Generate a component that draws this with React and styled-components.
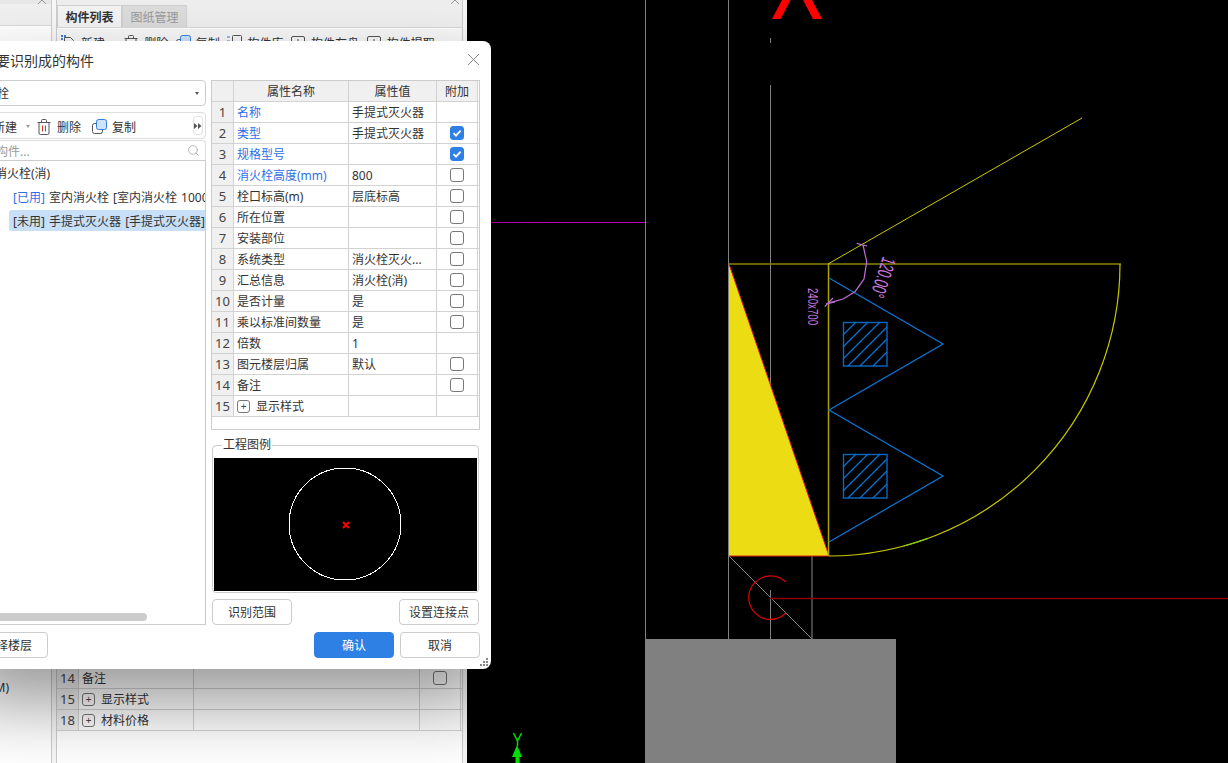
import React from "react";
import styled, { createGlobalStyle } from "styled-components";
import { Search } from "lucide-react";

const GlobalStyle = createGlobalStyle`
  html, body {
    margin: 0;
    padding: 0;
    overflow: hidden;
    background: #000;
  }
  body {
    font-family: "Noto Sans", "Noto Sans CJK SC", sans-serif;
    font-size: 12px;
    color: #333;
  }
`;

const Page = styled.div`
  position: relative;
  display: flex;
  width: 1228px;
  height: 763px;
  overflow: hidden;
`;

// background application panels, mostly hidden by the dialog
const SidePanel = styled.div`
  display: flex;
  gap: 4px;
  width: 467px;
  flex-shrink: 0;
  background: #f7f7f7;
`;

const LeftDock = styled.div`
  position: relative;
  display: flex;
  flex-direction: column;
  width: 52px;
  background: #fff;
  border-right: 1px solid #ccc;
  box-sizing: border-box;
`;

const LeftDockHead = styled.div`
  height: 26px;
  background: #f0f0f0;
  border-top: 4px solid #e8e8e8;
  border-bottom: 1px solid #ddd;
  box-sizing: border-box;
`;

const LeftDockBody = styled.div`
  flex: 1;
  display: flex;
  flex-direction: column;
  justify-content: flex-end;
  padding-bottom: 66px;
  overflow: hidden;
`;

const ClippedUnit = styled.div`
  margin-left: -9px;
  line-height: 18px;
  white-space: nowrap;
`;

const DockClose = styled.svg`
  position: absolute;
  top: -4px;
  right: ${(p) => p.$right}px;
  width: 8px;
  height: 8px;
  stroke: #999;
`;

const RightDock = styled.div`
  position: relative;
  display: flex;
  flex-direction: column;
  width: 407px;
  background: #fff;
  border-left: 1px solid #ccc;
  border-right: 1px solid #ccc;
  box-sizing: border-box;
`;

const Tabs = styled.div`
  display: flex;
  height: 28px;
  padding-top: 5px;
  background: #eeeeee;
  border-bottom: 1px solid #d8d8d8;
  box-sizing: border-box;
`;

const Tab = styled.div`
  width: 65px;
  display: flex;
  align-items: center;
  justify-content: center;
  background: ${(p) => (p.$active ? "#f3f3f3" : "#dcdcdc")};
  color: ${(p) => (p.$active ? "#333" : "#999")};
  font-weight: ${(p) => (p.$active ? 700 : 400)};
  border: 1px solid #d0d0d0;
  border-bottom: none;
  box-sizing: border-box;
`;

const Toolbar = styled.div`
  display: flex;
  align-items: center;
  gap: ${(p) => p.$gap || 8}px;
  height: ${(p) => p.$height || 27}px;
  padding-left: ${(p) => p.$left || 4}px;
  padding-right: 2px;
  background: ${(p) => p.$bg || "#fff"};
  box-sizing: border-box;
  white-space: nowrap;
`;

const DockToolbar = styled(Toolbar)`
  margin-top: 1px;
  padding-top: 1px;
`;

const Tool = styled.div`
  display: flex;
  align-items: center;
  gap: ${(p) => p.$gap || 6}px;
  margin-right: ${(p) => p.$after || 0}px;
  color: #333;
`;

const Caret = styled.span`
  width: 0;
  height: 0;
  margin-left: ${(p) => p.$ml || 0}px;
  border-left: 2.5px solid transparent;
  border-right: 2.5px solid transparent;
  border-top: 3px solid ${(p) => p.$color || "#999"};
`;

const DockBody = styled.div`
  flex: 1;
  display: flex;
  flex-direction: column;
  justify-content: flex-end;
  padding-bottom: 32px;
`;

const Row = styled.div`
  display: grid;
  grid-template-columns: ${(p) => p.$cols};
  height: 21px;
  box-sizing: border-box;
  border-bottom: 1px solid #d2d2d2;
`;

const Cell = styled.div`
  display: flex;
  align-items: center;
  gap: 6px;
  padding: 0 3px;
  min-width: 0;
  border-right: 1px solid #d2d2d2;
  color: ${(p) => (p.$link ? "#2f6fe6" : "#333")};
  white-space: nowrap;
  overflow: hidden;
`;

const NumCell = styled(Cell)`
  justify-content: center;
  padding: 0;
  background: #f0f0f0;
  font-size: 13px;
  color: #444;
`;

const HeadCell = styled(Cell)`
  justify-content: center;
  background: #f0f0f0;
`;

const CheckCell = styled(Cell)`
  justify-content: center;
  padding: 0;
`;

const Box = styled.span`
  display: flex;
  align-items: center;
  justify-content: center;
  width: 14px;
  height: 14px;
  box-sizing: border-box;
  border-radius: 3px;
  border: 1px solid ${(p) => (p.$checked ? "#2f80e4" : "#777")};
  background: ${(p) => (p.$checked ? "#2f80e4" : "transparent")};
`;

const Expand = styled.span`
  display: flex;
  align-items: center;
  justify-content: center;
  width: 13px;
  height: 13px;
  box-sizing: border-box;
  border: 1px solid #777;
  border-radius: 3px;
  font-size: 10px;
  line-height: 1;
  color: #444;
`;

const Canvas = styled.div`
  flex: 1;
  background: #000;
  svg {
    display: block;
    width: 100%;
    height: 100%;
  }
`;

// dialog
const Dialog = styled.div`
  position: absolute;
  left: -40px;
  top: 41px;
  width: 531px;
  height: 628px;
  display: flex;
  flex-direction: column;
  background: #fff;
  border-radius: 8px;
  box-shadow: 0 35px 70px rgba(0, 0, 0, 0.4);
`;

const TitleBar = styled.div`
  display: flex;
  align-items: center;
  justify-content: space-between;
  height: 39px;
  padding: 0 11px 2px 8px;
  font-size: 14px;
  box-sizing: border-box;
`;

const DialogBody = styled.div`
  flex: 1;
  display: flex;
  gap: 5px;
  padding: 0 11px 0 8px;
  min-height: 0;
`;

const LeftCol = styled.div`
  width: 238px;
  display: flex;
  flex-direction: column;
`;

const RightCol = styled.div`
  width: 269px;
  display: flex;
  flex-direction: column;
`;

const SelectBox = styled.div`
  display: flex;
  align-items: center;
  justify-content: space-between;
  height: 26px;
  padding: 0 6px 0 4px;
  border: 1px solid #ccc;
  border-radius: 4px;
  box-sizing: border-box;
  margin-right: 0;
`;

const ToolBox = styled(Toolbar)`
  margin-top: 6px;
  padding-top: 2px;
  border: 1px solid #ddd;
  border-radius: 4px;
`;

const MoreBtn = styled.div`
  margin-left: auto;
  margin-top: -2px;
  width: 10px;
  height: 19px;
  display: flex;
  align-items: center;
  justify-content: center;
  border: 1px solid #e2e2e2;
  border-radius: 3px;
  box-sizing: border-box;
`;

const SearchBox = styled.div`
  display: flex;
  align-items: center;
  justify-content: space-between;
  height: 20px;
  margin-top: 1px;
  padding: 0 5px 0 3px;
  border: 1px solid #ddd;
  border-bottom: none;
  border-radius: 4px 4px 0 0;
  color: #999;
  box-sizing: border-box;
`;

const Tree = styled.div`
  position: relative;
  flex: 1;
  padding-top: 1px;
  border: 1px solid #ccc;
  box-sizing: border-box;
  overflow: hidden;
`;

const TreeRow = styled.div`
  height: 21px;
  margin: 0 0 3px ${(p) => p.$indent}px;
  padding-left: ${(p) => p.$pad}px;
  display: flex;
  align-items: center;
  gap: 4px;
  white-space: nowrap;
  word-spacing: 1px;
  border-radius: 3px 0 0 3px;
  background: ${(p) => (p.$selected ? "#c7dff7" : "transparent")};
`;

const UsedTag = styled.span`
  color: #2f6fe6;
`;

const ScrollThumb = styled.div`
  position: absolute;
  left: 0;
  bottom: 3px;
  width: 178px;
  height: 8px;
  border-radius: 4px;
  background: #ccc;
`;

const PropTable = styled.div`
  height: 350px;
  padding-left: 0;
  border: 1px solid #ccc;
  box-sizing: border-box;
`;

const Legend = styled.fieldset`
  margin: 7px 1px 0;
  padding: 5px 1px 1px;
  height: 156px;
  border: 1px solid #ccc;
  border-radius: 4px;
  box-sizing: border-box;
  legend {
    margin-left: 8px;
    padding: 0 1px;
    line-height: 16px;
  }
`;

const Preview = styled.div`
  height: 133px;
  background: #000;
  svg {
    display: block;
    width: 100%;
    height: 100%;
  }
`;

const ButtonRow = styled.div`
  display: flex;
  justify-content: space-between;
  margin-top: 6px;
  padding: 0 1px;
`;

const Button = styled.button`
  width: 80px;
  height: 26px;
  padding: 0;
  border-radius: 4px;
  border: 1px solid ${(p) => (p.$primary ? "#2f80e4" : "#ccc")};
  background: ${(p) => (p.$primary ? "#2f80e4" : "#fff")};
  color: ${(p) => (p.$primary ? "#fff" : "#333")};
  font: inherit;
  font-size: 12px;
`;

const Footer = styled.div`
  display: flex;
  justify-content: space-between;
  padding: 7px 11px 11px 8px;
`;

const FooterRight = styled.div`
  display: flex;
  gap: 6px;
`;

const Grip = styled.svg`
  position: absolute;
  right: 2px;
  bottom: 2px;
  width: 9px;
  height: 9px;
  fill: #888;
`;

const dialogCols = "22px 115px 88px 41px";
const dockCols = "22px 115px 226px 41px";

const props = [
  { n: 1, name: "名称", value: "手提式灭火器", link: true, check: null },
  { n: 2, name: "类型", value: "手提式灭火器", link: true, check: true },
  { n: 3, name: "规格型号", value: "", link: true, check: true },
  { n: 4, name: "消火栓高度(mm)", value: "800", link: true, check: false },
  { n: 5, name: "栓口标高(m)", value: "层底标高", check: false },
  { n: 6, name: "所在位置", value: "", check: false },
  { n: 7, name: "安装部位", value: "", check: false },
  { n: 8, name: "系统类型", value: "消火栓灭火...", check: false },
  { n: 9, name: "汇总信息", value: "消火栓(消)", check: false },
  { n: 10, name: "是否计量", value: "是", check: false },
  { n: 11, name: "乘以标准间数量", value: "是", check: false },
  { n: 12, name: "倍数", value: "1", check: null },
  { n: 13, name: "图元楼层归属", value: "默认", check: false },
  { n: 14, name: "备注", value: "", check: false },
  { n: 15, name: "显示样式", value: "", check: null, expand: true },
];

const dockRows = [
  { n: 14, name: "备注", check: false },
  { n: 15, name: "显示样式", check: null, expand: true },
  { n: 18, name: "材料价格", check: null, expand: true },
];

const CheckBox = ({ checked }) => (
  <Box $checked={checked}>
    {checked && (
      <svg width="10" height="10" viewBox="0 0 10 10" fill="none" stroke="#fff" strokeWidth="1.8">
        <path d="M1.5 5.2 4 7.6 8.6 2.6" />
      </svg>
    )}
  </Box>
);

const PropRow = ({ cols, row }) => (
  <Row $cols={cols}>
    <NumCell>{row.n}</NumCell>
    <Cell $link={row.link}>
      {row.expand && <Expand>+</Expand>}
      {row.name}
    </Cell>
    <Cell>{row.value}</Cell>
    <CheckCell>{row.check !== null && <CheckBox checked={row.check} />}</CheckCell>
  </Row>
);

const NewIcon = () => (
  <svg width="14" height="15" viewBox="0 0 14 15" fill="none" stroke="#555">
    <path d="M3.5 2.5h6l3 3v8h-9z" />
    <path d="M0 0h2v2H0zM3 0h2v2H3zM0 3h2v2H0z" fill="#3a7fe0" stroke="none" />
  </svg>
);

const TrashIcon = () => (
  <svg width="14" height="16" viewBox="0 0 14 16" fill="none" stroke="#555">
    <path d="M.5 3.5h13M4.5 3.5v-2a1 1 0 0 1 1-1h3a1 1 0 0 1 1 1v2" />
    <path d="M2 3.5v10.5a1.5 1.5 0 0 0 1.5 1.5h7a1.5 1.5 0 0 0 1.5-1.5V3.500" />
    <path d="M5.500 6.500v6M8.500 6.500v6" stroke="#d63a2f" />
  </svg>
);

const CopyIcon = () => (
  <svg width="15" height="15" viewBox="0 0 15 15" fill="none">
    <rect x="0.5" y="4.500" width="10" height="10" rx="2" stroke="#555" />
    <rect x="4.500" y="0.500" width="10" height="10" rx="2" fill="#cfe2fa" stroke="#2f80e4" />
  </svg>
);

const LibIcon = () => (
  <svg width="15" height="15" viewBox="0 0 15 15" fill="none" stroke="#555">
    <rect x="5.500" y="0.500" width="9" height="13" rx="1" />
    <path d="M0 2h3M0 6h3M0 10h3" stroke="#3a7fe0" />
  </svg>
);

const SaveIcon = () => (
  <svg width="14" height="14" viewBox="0 0 14 14" fill="none" stroke="#555">
    <rect x="0.500" y="0.500" width="13" height="13" rx="1.500" />
    <path d="M3.500 13V8h7v5M7 3v3" />
  </svg>
);

const hatch = [1310, 1322, 1334, 1346, 1358, 1371];
const triangle = "M829 278 943 344 829 410 943 476 829 542";

const Drawing = () => (
  <svg viewBox="467 0 761 763" fill="none">
    <path d="M491 222.500H645" stroke="#c000c0" />
    <path d="M645.500 0V640" stroke="#808080" />
    <path d="M728.500 0V640" stroke="#808080" />
    <path d="M770.500 38V43M770.500 85V400M770.500 590V639" stroke="#808080" />
    <path d="M812 556V639" stroke="#5c5c5c" strokeWidth="1.500" />
    <path d="M729 556 812 639" stroke="#808080" />

    <path d="M772 19h8.500l10-19h-8.500zM813 19h9l-10-19h-9z" fill="#ff0000" />

    <path d="M729 264 829 556H729z" fill="#ebdc14" />
    <path d="M729 264 829 556H729" stroke="#e02010" />
    <path d="M729 264H1121" stroke="#8a8400" strokeWidth="1.500" />
    <path d="M828.500 264V556" stroke="#aaa200" strokeWidth="1.500" />
    <path d="M828 264 1082 118" stroke="#c8c800" />
    <path d="M1120 264A292 292 0 0 1 829 556" stroke="#c8c800" strokeWidth="1.200" />
    <path d="M927.900 538.400A292 292 0 0 1 903.600 546" stroke="#80d010" strokeWidth="1.200" />

    <path d={triangle} stroke="#0a78dc" strokeWidth="1.200" />
    {[0, -132].map((dy) => (
      <g key={dy} transform={`translate(0 ${dy})`} stroke="#0a70d0" strokeWidth="1.200">
        <rect x="843.500" y="454.500" width="43.500" height="43.500" stroke="#0a68c0" strokeWidth="1.400" />
        {hatch.map((c) => (
          <path
            key={c}
            d={`M${Math.max(843, c - 498)} ${Math.min(498, c - 843)}L${Math.min(887, c - 454)} ${Math.max(454, c - 887)}`}
          />
        ))}
      </g>
    ))}

    <g stroke="#c070d8" strokeWidth="1.200">
      <path d="M856.700 243.300 867 246M863 245 866.700 261.700 864 279 855 291.700 843 299 830 302.700" />
      <path d="M824.700 306.700 833 298M826 304 835 302" />
    </g>
    <g fill="#c878dc" fontFamily="Liberation Sans, sans-serif">
      <text
        transform="translate(883 256) rotate(108)"
        fontSize="20"
        textLength="41"
        lengthAdjust="spacingAndGlyphs"
      >
        120.00°
      </text>
      <text
        transform="translate(808 288) rotate(90)"
        fontSize="15"
        textLength="37"
        lengthAdjust="spacingAndGlyphs"
      >
        240x700
      </text>
    </g>

    <path d="M785.700 582A21.800 21.800 0 1 0 786 613" stroke="#e00000" strokeWidth="1.200" />
    <path d="M770 598.500H1228" stroke="#8a0000" strokeWidth="1.500" />

    <rect x="645" y="639" width="251" height="124" fill="#808080" />

    <path d="M513.500 733 517.500 741 521.500 733M517.500 741V746" stroke="#00e000" strokeWidth="1.500" />
    <path d="M517 745 522 757H519.500V763H515.500V757H512z" fill="#00e000" />
  </svg>
);

export default function App() {
  return (
    <Page>
      <GlobalStyle />
      <SidePanel>
        <LeftDock>
          <LeftDockHead />
          <DockClose $right={5} viewBox="0 0 8 8">
            <path d="M0 0 8 8M8 0 0 8" />
          </DockClose>
          <LeftDockBody>
            <ClippedUnit>(M)</ClippedUnit>
          </LeftDockBody>
        </LeftDock>
        <RightDock>
          <Tabs>
            <Tab $active>构件列表</Tab>
            <Tab>图纸管理</Tab>
          </Tabs>
          <DockClose $right={3} viewBox="0 0 8 8">
            <path d="M0 0 8 8M8 0 0 8" />
          </DockClose>
          <DockToolbar $bg="#f7f7f7" $height={26} $gap={7.6}>
            <Tool><NewIcon />新建</Tool>
            <Caret />
            <Tool><TrashIcon />删除</Tool>
            <Tool $gap={5}><CopyIcon />复制</Tool>
            <Tool $gap={5}><LibIcon />构件库</Tool>
            <Tool><SaveIcon />构件存盘</Tool>
            <Tool><SaveIcon />构件提取</Tool>
          </DockToolbar>
          <DockBody>
            {dockRows.map((row) => (
              <PropRow key={row.n} cols={dockCols} row={{ ...row, value: "" }} />
            ))}
          </DockBody>
        </RightDock>
      </SidePanel>

      <Canvas>
        <Drawing />
      </Canvas>

      <Dialog>
        <TitleBar>
          选择要识别成的构件
          <svg width="13" height="13" viewBox="0 0 13 13" stroke="#888" fill="none">
            <path d="M1 1 12 12M12 1 1 12" />
          </svg>
        </TitleBar>
        <DialogBody>
          <LeftCol>
            <SelectBox>
              消火栓
              <Caret $color="#555" />
            </SelectBox>
            <ToolBox $left={6} $gap={7}>
              <Tool $gap={4}><NewIcon />新建</Tool>
              <Caret $ml={2} />
              <Tool $after={4}><TrashIcon />删除</Tool>
              <Tool $gap={5}><CopyIcon />复制</Tool>
              <MoreBtn>
                <svg width="8" height="6" viewBox="0 0 8 6" fill="#555">
                  <path d="M0 0 3.500 3 0 6zM4 0 7.500 3 4 6z" />
                </svg>
              </MoreBtn>
            </ToolBox>
            <SearchBox>
              搜索构件...
              <Search size={13} strokeWidth={1.500} color="#aaa" />
            </SearchBox>
            <Tree>
              <TreeRow $indent={0} $pad={26}>消火栓(消)</TreeRow>
              <TreeRow $indent={40} $pad={4}>
                <UsedTag>[已用]</UsedTag> 室内消火栓 [室内消火栓 1000
              </TreeRow>
              <TreeRow $indent={40} $pad={4} $selected>
                [未用] 手提式灭火器 [手提式灭火器]
              </TreeRow>
              <ScrollThumb />
            </Tree>
          </LeftCol>
          <RightCol>
            <PropTable>
              <Row $cols={dialogCols}>
                <HeadCell />
                <HeadCell>属性名称</HeadCell>
                <HeadCell>属性值</HeadCell>
                <HeadCell>附加</HeadCell>
              </Row>
              {props.map((row) => (
                <PropRow key={row.n} cols={dialogCols} row={row} />
              ))}
            </PropTable>
            <Legend>
              <legend>工程图例</legend>
              <Preview>
                <svg viewBox="214 458 263 133" fill="none">
                  <circle cx="345" cy="524" r="56" stroke="#fff" shapeRendering="crispEdges" />
                  <path d="M343 522 349 528M349 522 343 528" stroke="#ff0000" strokeWidth="2" />
                </svg>
              </Preview>
            </Legend>
            <ButtonRow>
              <Button>识别范围</Button>
              <Button>设置连接点</Button>
            </ButtonRow>
          </RightCol>
        </DialogBody>
        <Footer>
          <Button>选择楼层</Button>
          <FooterRight>
            <Button $primary>确认</Button>
            <Button>取消</Button>
          </FooterRight>
        </Footer>
        <Grip viewBox="0 0 9 9">
          <path d="M6 0h2v2H6zM3 3h2v2H3zM6 3h2v2H6zM0 6h2v2H0zM3 6h2v2H3zM6 6h2v2H6z" />
        </Grip>
      </Dialog>
    </Page>
  );
}
